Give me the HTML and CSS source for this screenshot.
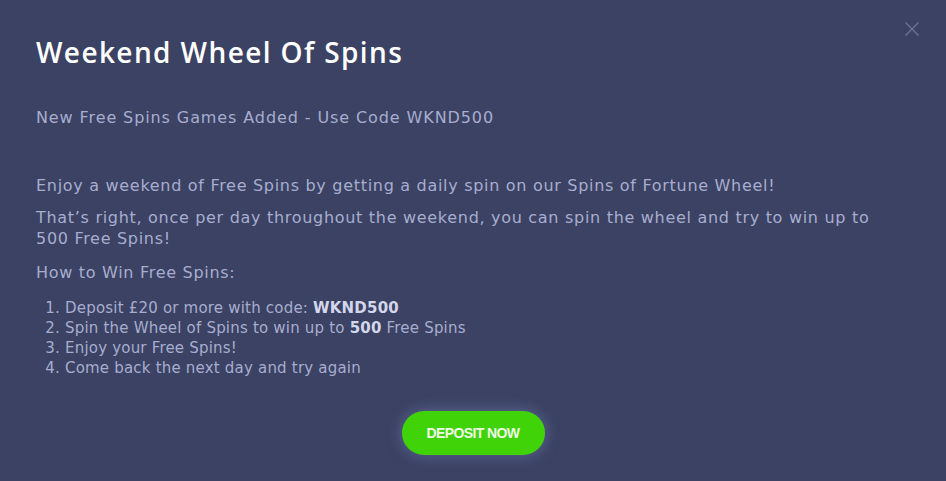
FILE: index.html
```html
<!DOCTYPE html>
<html lang="en">
<head>
<meta charset="utf-8">
<link rel="stylesheet" href="styles.css">
</head>
<body>
<div class="modal">
  <button class="close" aria-label="Close">
    <svg width="14" height="14" viewBox="0 0 14 14"><path d="M1 1L13 13M13 1L1 13" stroke="currentColor" stroke-width="1.4" stroke-linecap="round"/></svg>
  </button>
  <h1 class="title">Weekend Wheel Of Spins</h1>
  <p class="subtitle">New Free Spins Games Added - Use Code WKND500</p>
  <div class="content">
    <p>Enjoy a weekend of Free Spins by getting a daily spin on our Spins of Fortune Wheel!</p>
    <p>That’s right, once per day throughout the weekend, you can spin the wheel and try to win up to 500 Free Spins!</p>
    <p class="howto">How to Win Free Spins:</p>
    <ol class="steps">
      <li>Deposit £20 or more with code: <strong>WKND500</strong></li>
      <li>Spin the Wheel of Spins to win up to <strong>500</strong> Free Spins</li>
      <li>Enjoy your Free Spins!</li>
      <li>Come back the next day and try again</li>
    </ol>
  </div>
  <div class="actions">
    <button class="cta">DEPOSIT NOW</button>
  </div>
</div>
</body>
</html>
```
FILE: styles.css
```css
html, body {
  margin: 0;
  padding: 0;
  background: #3b4263;
  height: 100%;
}
body {
  font-family: "DejaVu Sans", "Open Sans", sans-serif;
  color: #a8add0;
  overflow: hidden;
}
.modal {
  position: relative;
  padding: 34px 36px 0 36px;
  box-sizing: border-box;
  height: 481px;
}
.close {
  position: absolute;
  top: 22px;
  right: 27px;
  background: none;
  border: 0;
  padding: 0;
  color: #6b7299;
  cursor: pointer;
}
.title {
  margin: 0;
  font-family: "Open Sans", sans-serif;
  font-size: 28px;
  font-weight: 600;
  color: #ffffff;
  line-height: 36px;
  letter-spacing: 1.4px;
}
.subtitle {
  margin: 37px 0 0 0;
  font-size: 16px;
  line-height: 22px;
  letter-spacing: 0.9px;
}
.content {
  margin-top: 46px;
  max-width: 860px;
  font-size: 16px;
  line-height: 21px;
  letter-spacing: 0.7px;
}
.content p {
  margin: 0 0 11px 0;
}
.content .howto {
  margin-top: 13px;
}
.steps {
  margin: 15px 0 0 0;
  padding-left: 29px;
  font-size: 15px;
  line-height: 20px;
  letter-spacing: 0.2px;
}
.steps strong {
  color: #d4d7ec;
  font-weight: 700;
}
.actions {
  display: flex;
  justify-content: center;
  margin-top: 33px;
}
.cta {
  width: 143px;
  height: 44px;
  border: 0;
  border-radius: 22px;
  background: #40d408;
  color: #eef9e6;
  font-family: "Liberation Sans", Arial, sans-serif;
  font-weight: 700;
  font-size: 14px;
  letter-spacing: -0.6px;
  box-shadow: 0 0 16px rgba(140, 150, 220, 0.45);
  cursor: pointer;
}
```
